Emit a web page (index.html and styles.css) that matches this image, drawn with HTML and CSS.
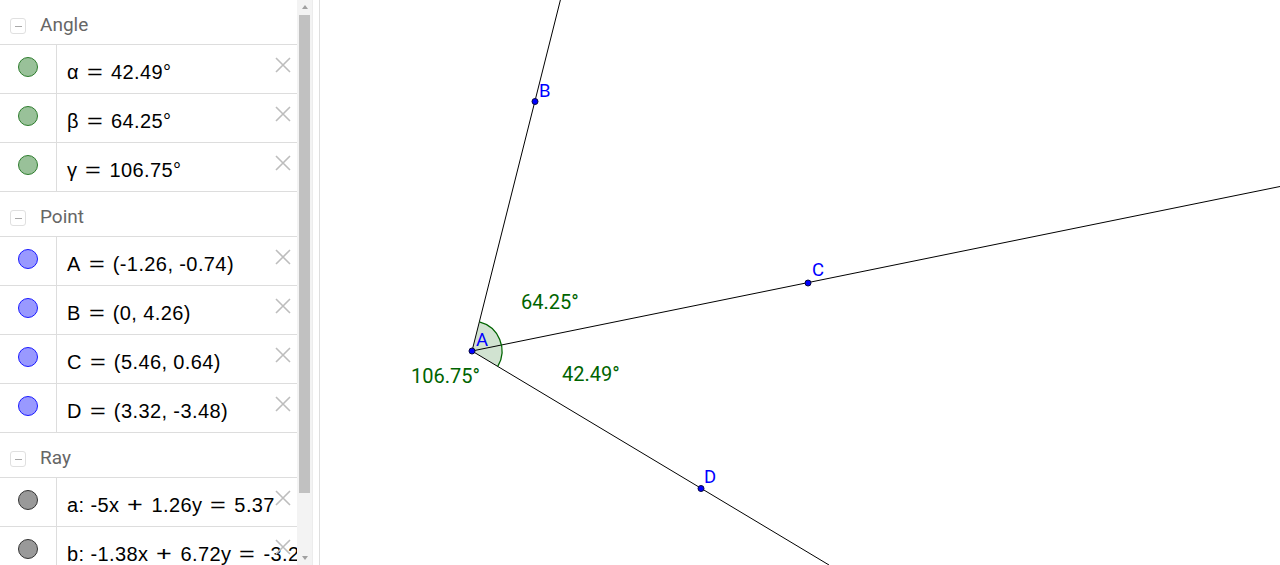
FILE: index.html
```html
<!DOCTYPE html>
<html lang="en">
<head>
<meta charset="utf-8">
<title>Angles</title>
<link rel="stylesheet" href="styles.css">
</head>
<body>
<div class="app">
  <div class="algebra">
    <div class="group-header"><span class="toggle"></span><span class="title">Angle</span></div>
    <div class="item">
      <div class="marker"><span class="dot dot-angle"></span></div>
      <div class="content"><span class="formula">α<span class="op">=</span>42.49°</span>
        <svg class="close" viewBox="0 0 16 16"><path d="M1 1L15 15M15 1L1 15"/></svg></div>
    </div>
    <div class="item">
      <div class="marker"><span class="dot dot-angle"></span></div>
      <div class="content"><span class="formula">β<span class="op">=</span>64.25°</span>
        <svg class="close" viewBox="0 0 16 16"><path d="M1 1L15 15M15 1L1 15"/></svg></div>
    </div>
    <div class="item">
      <div class="marker"><span class="dot dot-angle"></span></div>
      <div class="content"><span class="formula">γ<span class="op">=</span>106.75°</span>
        <svg class="close" viewBox="0 0 16 16"><path d="M1 1L15 15M15 1L1 15"/></svg></div>
    </div>
    <div class="group-header"><span class="toggle"></span><span class="title">Point</span></div>
    <div class="item">
      <div class="marker"><span class="dot dot-point"></span></div>
      <div class="content"><span class="formula">A<span class="op">=</span>(-1.26, -0.74)</span>
        <svg class="close" viewBox="0 0 16 16"><path d="M1 1L15 15M15 1L1 15"/></svg></div>
    </div>
    <div class="item">
      <div class="marker"><span class="dot dot-point"></span></div>
      <div class="content"><span class="formula">B<span class="op">=</span>(0, 4.26)</span>
        <svg class="close" viewBox="0 0 16 16"><path d="M1 1L15 15M15 1L1 15"/></svg></div>
    </div>
    <div class="item">
      <div class="marker"><span class="dot dot-point"></span></div>
      <div class="content"><span class="formula">C<span class="op">=</span>(5.46, 0.64)</span>
        <svg class="close" viewBox="0 0 16 16"><path d="M1 1L15 15M15 1L1 15"/></svg></div>
    </div>
    <div class="item">
      <div class="marker"><span class="dot dot-point"></span></div>
      <div class="content"><span class="formula">D<span class="op">=</span>(3.32, -3.48)</span>
        <svg class="close" viewBox="0 0 16 16"><path d="M1 1L15 15M15 1L1 15"/></svg></div>
    </div>
    <div class="group-header"><span class="toggle"></span><span class="title">Ray</span></div>
    <div class="item">
      <div class="marker"><span class="dot dot-ray"></span></div>
      <div class="content"><span class="formula">a: -5x<span class="op">+</span>1.26y<span class="op">=</span>5.37</span>
        <svg class="close" viewBox="0 0 16 16"><path d="M1 1L15 15M15 1L1 15"/></svg></div>
    </div>
    <div class="item">
      <div class="marker"><span class="dot dot-ray"></span></div>
      <div class="content"><span class="formula">b: -1.38x<span class="op">+</span>6.72y<span class="op">=</span>-3.28</span>
        <svg class="close" viewBox="0 0 16 16"><path d="M1 1L15 15M15 1L1 15"/></svg></div>
    </div>
  </div>
  <div class="scrollbar">
    <div class="arrow-box"><span class="arrow-up"></span></div>
    <div class="thumb"></div>
    <div class="track-rest"></div>
    <span class="arrow-down"></span>
  </div>
  <div class="splitter"></div>
  <div class="canvas">
    <svg class="graphics" viewBox="320 0 960 565" width="960" height="565">
      <path class="sector" d="M472 351 L479.33 321.91 A30 30 0 0 1 497.75 366.40 Z"/>
      <line class="ray" x1="472" y1="351" x2="560.4" y2="0"/>
      <line class="ray" x1="472" y1="351" x2="1280" y2="186.5"/>
      <line class="ray" x1="472" y1="351" x2="829" y2="565"/>
      <path class="arc" d="M479.33 321.91 A30 30 0 0 1 497.75 366.40"/>
      <circle class="pt" cx="472" cy="351" r="3"/>
      <circle class="pt" cx="535" cy="101.5" r="3"/>
      <circle class="pt" cx="808" cy="283" r="3"/>
      <circle class="pt" cx="701" cy="488.5" r="3"/>
      <text class="lbl" x="476" y="346">A</text>
      <text class="lbl" x="539" y="97">B</text>
      <text class="lbl" x="812" y="276">C</text>
      <text class="lbl" x="704" y="483">D</text>
      <text class="ang" x="521" y="309">64.25°</text>
      <text class="ang" x="411" y="383">106.75°</text>
      <text class="ang" x="562" y="381">42.49°</text>
    </svg>
  </div>
</div>
</body>
</html>
```

FILE: styles.css
```css
html, body {
  margin: 0;
  padding: 0;
  background: #ffffff;
  overflow: hidden;
}

.app {
  display: flex;
  width: 1280px;
  height: 565px;
  overflow: hidden;
}

.algebra {
  width: 297px;
  flex: 0 0 297px;
  overflow: hidden;
  background: #ffffff;
}

.group-header {
  display: flex;
  align-items: flex-start;
  height: 44px;
  border-bottom: 1px solid #dddddd;
  padding-left: 10px;
  box-sizing: content-box;
}

.toggle {
  position: relative;
  width: 14px;
  height: 14px;
  margin-top: 18px;
  border: 1px solid #e0e0e0;
  border-radius: 3px;
  flex: 0 0 auto;
}

.toggle::after {
  content: "";
  position: absolute;
  left: 4px;
  top: 7px;
  width: 7px;
  height: 1px;
  background: #a8a8a8;
}

.title {
  margin-left: 14px;
  padding-top: 13px;
  font-family: Roboto, "Liberation Sans", sans-serif;
  font-size: 19px;
  line-height: 24px;
  color: #666666;
}

.item {
  display: flex;
  height: 48px;
  border-bottom: 1px solid #dddddd;
}

.marker {
  width: 57px;
  flex: 0 0 57px;
  border-right: 1px solid #dddddd;
  display: flex;
  justify-content: center;
  align-items: flex-start;
  padding-top: 12px;
  padding-right: 1px;
  box-sizing: border-box;
}

.dot {
  width: 18px;
  height: 18px;
  border-radius: 50%;
  border: 1px solid #000;
}

.dot-angle {
  background: #99c199;
  border-color: #2e7d2e;
}

.dot-point {
  background: #9999ff;
  border-color: #1a1aff;
}

.dot-ray {
  background: #999999;
  border-color: #333333;
}

.content {
  position: relative;
  flex: 1 1 auto;
  min-width: 0;
  padding-left: 10px;
  padding-top: 15px;
  box-sizing: border-box;
  white-space: nowrap;
  overflow: hidden;
}

.formula {
  font-family: "Liberation Sans", Arial, sans-serif;
  font-size: 20px;
  line-height: 24px;
  letter-spacing: 0.4px;
  color: #000000;
}

.op {
  display: inline-block;
  width: 32px;
  text-align: center;
  letter-spacing: 0;
  transform: scaleX(1.35);
}

.close {
  position: absolute;
  right: 6px;
  top: 12px;
  width: 16px;
  height: 16px;
  fill: none;
  stroke: #bdbdbd;
  stroke-width: 1.6;
}

.scrollbar {
  width: 15px;
  flex: 0 0 15px;
  display: flex;
  flex-direction: column;
  align-items: center;
  background: #f3f3f3;
}

.arrow-box {
  height: 15px;
  width: 100%;
  display: flex;
  justify-content: center;
  align-items: flex-start;
  padding-top: 5px;
  box-sizing: border-box;
}

.arrow-up {
  width: 0;
  height: 0;
  border-left: 3.5px solid transparent;
  border-right: 3.5px solid transparent;
  border-bottom: 4px solid #a0a0a0;
}

.thumb {
  width: 11px;
  height: 478px;
  background: #c1c1c1;
}

.track-rest {
  flex: 1 1 auto;
}

.arrow-down {
  width: 0;
  height: 0;
  margin-bottom: 5px;
  border-left: 3.5px solid transparent;
  border-right: 3.5px solid transparent;
  border-top: 4px solid #a0a0a0;
}

.splitter {
  width: 8px;
  flex: 0 0 8px;
  box-sizing: border-box;
  border-left: 1px solid #ececec;
  border-right: 1px solid #dedede;
  background: #ffffff;
}

.canvas {
  width: 960px;
  flex: 0 0 960px;
  height: 565px;
  background: #ffffff;
}

.graphics {
  display: block;
}

.sector {
  fill: rgba(0, 100, 0, 0.18);
  stroke: none;
}

.arc {
  fill: none;
  stroke: #006400;
  stroke-width: 1.3;
}

.ray {
  stroke: #000000;
  stroke-width: 1;
}

.pt {
  fill: #0000ff;
  stroke: #0a0a40;
  stroke-width: 1;
}

.lbl {
  font-family: Roboto, "Liberation Sans", sans-serif;
  font-size: 18.5px;
  fill: #0000ff;
}

.ang {
  font-family: Roboto, "Liberation Sans", sans-serif;
  font-size: 20px;
  fill: #006400;
}
```
